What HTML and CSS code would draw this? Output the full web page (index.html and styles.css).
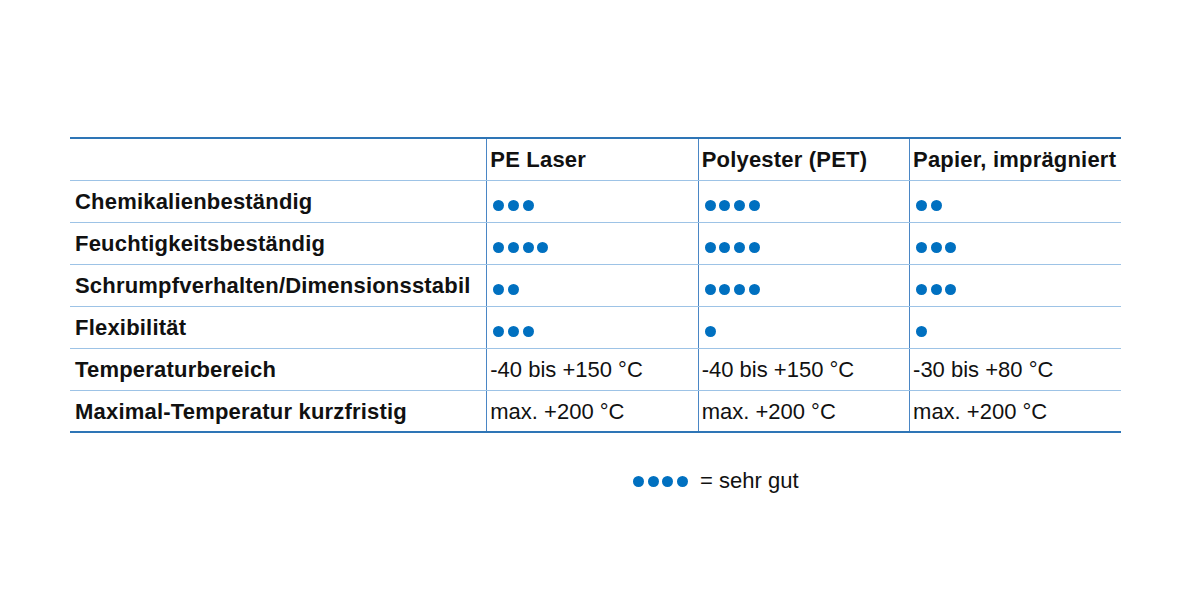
FILE: index.html
```html
<!DOCTYPE html>
<html lang="de">
<head>
<meta charset="utf-8">
<title>Materialvergleich</title>
<link rel="stylesheet" href="styles.css">
</head>
<body>
<div class="page">
  <table class="cmp">
    <colgroup>
      <col class="c-label">
      <col class="c-val">
      <col class="c-val">
      <col class="c-val">
    </colgroup>
    <thead>
      <tr>
        <th></th>
        <th>PE Laser</th>
        <th>Polyester (PET)</th>
        <th>Papier, imprägniert</th>
      </tr>
    </thead>
    <tbody>
      <tr>
        <th>Chemikalienbeständig</th>
        <td><span class="dots"><i></i><i></i><i></i></span></td>
        <td><span class="dots"><i></i><i></i><i></i><i></i></span></td>
        <td><span class="dots"><i></i><i></i></span></td>
      </tr>
      <tr>
        <th>Feuchtigkeitsbeständig</th>
        <td><span class="dots"><i></i><i></i><i></i><i></i></span></td>
        <td><span class="dots"><i></i><i></i><i></i><i></i></span></td>
        <td><span class="dots"><i></i><i></i><i></i></span></td>
      </tr>
      <tr>
        <th>Schrumpfverhalten/Dimensionsstabil</th>
        <td><span class="dots"><i></i><i></i></span></td>
        <td><span class="dots"><i></i><i></i><i></i><i></i></span></td>
        <td><span class="dots"><i></i><i></i><i></i></span></td>
      </tr>
      <tr>
        <th>Flexibilität</th>
        <td><span class="dots"><i></i><i></i><i></i></span></td>
        <td><span class="dots"><i></i></span></td>
        <td><span class="dots"><i></i></span></td>
      </tr>
      <tr>
        <th>Temperaturbereich</th>
        <td>-40 bis +150 °C</td>
        <td>-40 bis +150 °C</td>
        <td>-30 bis +80 °C</td>
      </tr>
      <tr>
        <th>Maximal-Temperatur kurzfristig</th>
        <td>max. +200 °C</td>
        <td>max. +200 °C</td>
        <td>max. +200 °C</td>
      </tr>
    </tbody>
  </table>
  <div class="legend">
    <span class="dots"><i></i><i></i><i></i><i></i></span>
    <span class="legend-text">= sehr gut</span>
  </div>
</div>
</body>
</html>
```

FILE: styles.css
```css
html, body {
  margin: 0;
  padding: 0;
  background: #ffffff;
}
body {
  font-family: "Liberation Sans", Arial, sans-serif;
  color: #111111;
}
.page {
  width: 1200px;
  height: 600px;
  padding-top: 137px;
  box-sizing: border-box;
}
.cmp {
  margin-left: 70px;
  width: 1051px;
  border-collapse: collapse;
  table-layout: fixed;
  font-size: 22px;
}
.c-label { width: 416px; }
.c-val { width: 211px; }
.cmp thead tr {
  border-top: 2px solid #2e75b6;
}
.cmp tbody tr:last-child {
  border-bottom: 2px solid #2e75b6;
}
.cmp th,
.cmp td {
  height: 42px;
  padding: 2px 0 0 3px;
  text-align: left;
  vertical-align: middle;
  white-space: nowrap;
  border-bottom: 1px solid #9dc3e6;
  box-sizing: border-box;
  line-height: 24px;
}
.cmp th {
  font-weight: bold;
  letter-spacing: 0.2px;
}
.cmp tbody th {
  padding-left: 5px;
}
.cmp tbody tr:last-child th,
.cmp tbody tr:last-child td {
  border-bottom: none;
}
.cmp th + th,
.cmp th + td,
.cmp td + td {
  border-left: 1px solid #4a86c5;
}
.cmp td {
  font-weight: normal;
}
.dots {
  display: inline-flex;
  gap: 3.7px;
  padding-left: 3px;
  padding-top: 4px;
  vertical-align: middle;
}
.dots i {
  display: block;
  width: 11px;
  height: 11px;
  border-radius: 50%;
  background: #0070c0;
}
.legend {
  margin-top: 35px;
  margin-left: 630px;
  display: flex;
  align-items: center;
  gap: 12px;
  font-size: 22px;
}
.legend .dots {
  padding-top: 0;
}
```
